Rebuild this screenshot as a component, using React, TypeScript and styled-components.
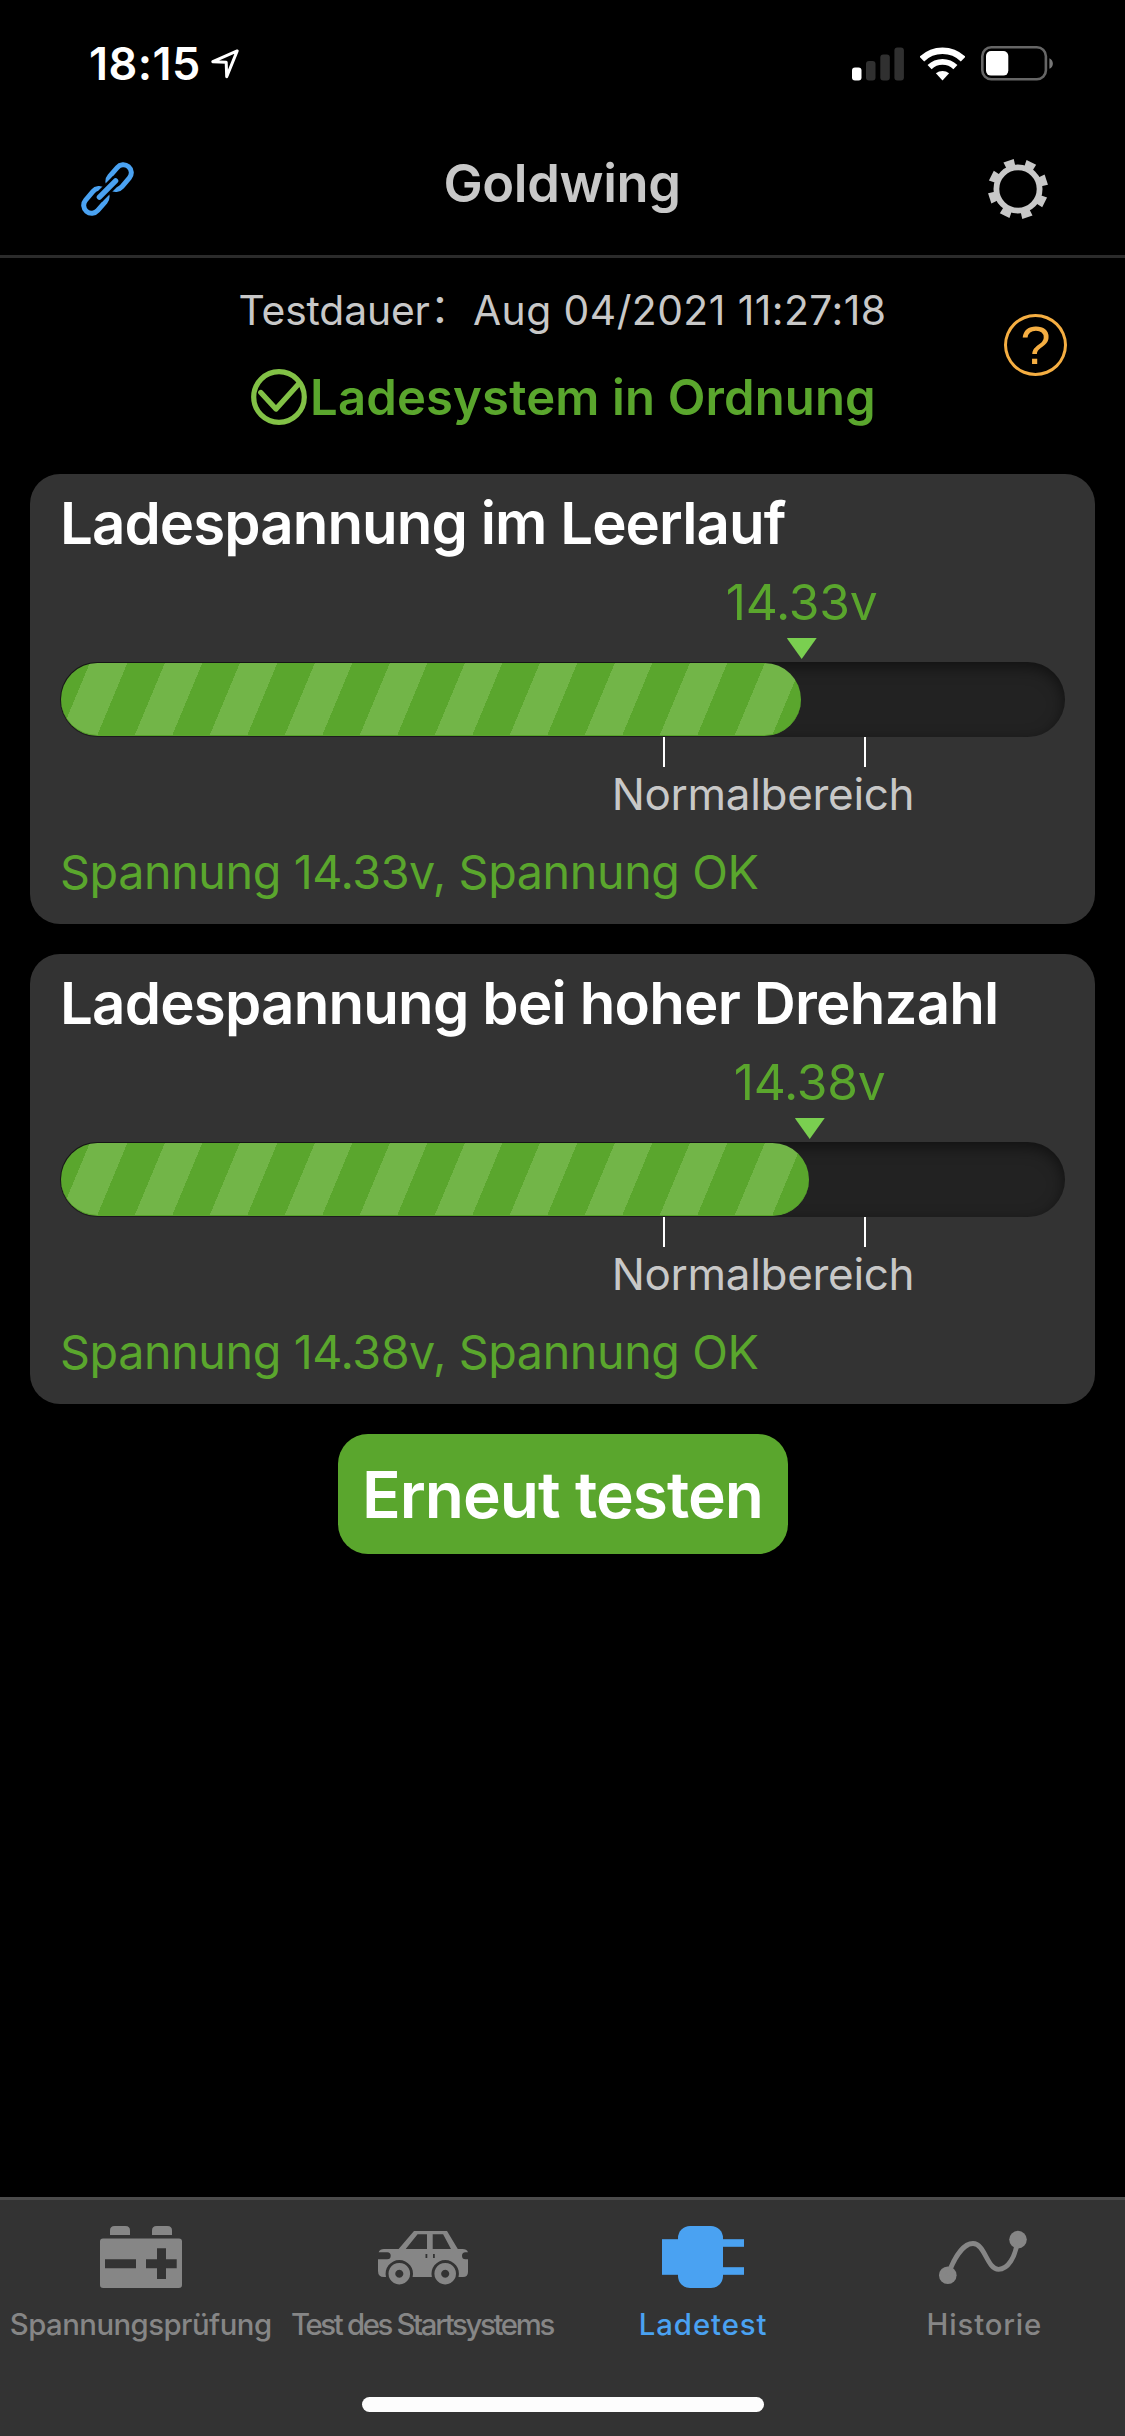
import React from "react";
import styled, { createGlobalStyle } from "styled-components";

const GREEN = "#5aa62d";

const GlobalStyle = createGlobalStyle`
  *, *::before, *::after { box-sizing: border-box; }
  html, body { margin: 0; padding: 0; background: #000; }
  body { font-family: Inter, "Liberation Sans", "Noto Sans CJK SC", sans-serif; }
  h1, h2, p { margin: 0; font-weight: inherit; }
`;

const Screen = styled.div`
  display: flex;
  flex-direction: column;
  width: 1125px;
  height: 2436px;
  background: #000;
  overflow: hidden;
  white-space: nowrap;
`;

const StatusBar = styled.div`
  display: flex;
  align-items: center;
  height: 127px;
  padding: 0 71px 0 89px;
  color: #fff;
`;

const Clock = styled.span`
  font-size: 45px;
  font-weight: 600;
  line-height: 56px;
  letter-spacing: 0.45px;
`;

const LocationIcon = styled.svg`
  width: 30px;
  height: 31px;
  margin-left: 9px;
`;

const StatusIcons = styled.div`
  display: flex;
  align-items: center;
  gap: 16px;
  margin-left: auto;
`;

const NavBar = styled.header`
  display: flex;
  align-items: center;
  justify-content: space-between;
  height: 131px;
  padding: 0 77px 4px 81px;
  border-bottom: 3px solid #2b2b2b;
`;

const NavTitle = styled.h1`
  margin: 0 0 13px 2px;
  color: #c8c8c8;
  font-size: 52.4px;
  font-weight: 600;
  line-height: 64px;
  letter-spacing: -0.36px;
`;

const Summary = styled.section`
  display: grid;
  grid-template-columns: 1fr auto 1fr;
  grid-template-rows: 60px 60px;
  row-gap: 27px;
  height: 216px;
  padding-top: 22px;
`;

const TestTime = styled.p`
  grid-column: 2;
  justify-self: center;
  color: #c8c8c8;
  font-size: 40.8px;
  line-height: 60px;
  letter-spacing: 0.46px;
`;

const TestTimeLabel = styled.span`
  letter-spacing: -0.15px;
`;

const WideColon = styled.span`
  margin-right: 2px;
  line-height: 0;
  vertical-align: 2px;
`;

const Verdict = styled.div`
  grid-column: 2;
  grid-row: 2;
  justify-self: center;
  display: flex;
  align-items: center;
  gap: 3px;
  margin-left: 2px;
  color: ${GREEN};
  font-size: 49px;
  font-weight: 600;
  line-height: 60px;
  letter-spacing: 0.15px;
`;

const VerdictText = styled.span`
  padding-top: 2px;
`;

const HelpButton = styled.div`
  grid-column: 3;
  grid-row: 1 / 3;
  justify-self: end;
  align-self: center;
  display: flex;
  align-items: center;
  justify-content: center;
  width: 63px;
  height: 62px;
  margin: 0 58px 17px 0;
  border: 3.5px solid #f5ae42;
  border-radius: 50%;
  color: #f5ae42;
  font-family: "Liberation Sans", sans-serif;
  font-size: 54px;
  line-height: 54px;
`;

const Content = styled.main`
  display: flex;
  flex: 1;
  flex-direction: column;
  align-items: center;
  gap: 30px;
  padding: 0 30px;
`;

const Card = styled.section`
  display: flex;
  flex-direction: column;
  width: 100%;
  height: 450px;
  padding: 14px 30px 22px;
  border-radius: 30px;
  background: #333;
`;

const CardTitle = styled.h2<{ $tracking: number }>`
  color: #fff;
  font-size: 58.2px;
  font-weight: 600;
  line-height: 70px;
  letter-spacing: ${(p) => p.$tracking}px;
`;

const Marker = styled.div<{ $at: number }>`
  display: flex;
  flex-direction: column;
  align-items: center;
  width: max-content;
  margin: 14px 0 3px ${(p) => p.$at}%;
  transform: translateX(-50%);
`;

const MarkerValue = styled.span`
  margin-bottom: 6px;
  color: ${GREEN};
  font-size: 49.7px;
  line-height: 60px;
  letter-spacing: -0.2px;
`;

const Pointer = styled.i`
  width: 30px;
  height: 21px;
  background: #7acf50;
  clip-path: polygon(0 0, 100% 0, 50% 100%);
`;

const Track = styled.div`
  height: 75px;
  padding: 1px;
  border-radius: 38px;
  background: #222;
  box-shadow: inset 0 5px 15px rgba(0, 0, 0, 0.5);
`;

const Fill = styled.div<{ $to: number }>`
  width: ${(p) => p.$to}%;
  height: 73px;
  border-radius: 37px;
  border-bottom: 1px solid ${GREEN};
  background: repeating-linear-gradient(
    112.6deg,
    ${GREEN} 0 26.6px,
    #72b548 26.6px 61.2px,
    ${GREEN} 61.2px 69.24px
  );
`;

const Range = styled.div`
  display: flex;
  flex-direction: column;
  align-items: center;
  width: calc(20% + 2px);
  margin-left: 60%;
`;

const RangeTicks = styled.div`
  width: 100%;
  height: 30px;
  border: solid #fff;
  border-width: 0 2px;
`;

const RangeLabel = styled.span`
  margin-top: 2px;
  padding-right: 3px;
  color: #c8c8c8;
  font-size: 44px;
  line-height: 50px;
  letter-spacing: -0.3px;
`;

const Message = styled.p`
  margin-top: auto;
  color: ${GREEN};
  font-size: 46.7px;
  line-height: 60px;
  letter-spacing: -0.41px;
`;

const RetestButton = styled.button`
  width: 450px;
  height: 120px;
  padding: 2px 0 0;
  border: 0;
  border-radius: 30px;
  background: ${GREEN};
  color: #fff;
  font: 600 64px/76px Inter, "Liberation Sans", sans-serif;
  letter-spacing: -0.96px;
`;

const TabBar = styled.footer`
  display: flex;
  flex-direction: column;
  align-items: center;
  height: 239px;
  border-top: 3px solid #4b4b4b;
  background: #333;
`;

const Tabs = styled.nav`
  display: grid;
  grid-template-columns: repeat(4, minmax(0, 1fr));
  width: 100%;
  height: 197px;
`;

const Tab = styled.div<{ $active?: boolean }>`
  display: flex;
  flex-direction: column;
  align-items: center;
  gap: 19px;
  padding-top: 26px;
  color: ${(p) => (p.$active ? "#4aa2f2" : "#868686")};
`;

const TabLabel = styled.span<{ $tracking: number }>`
  font-size: 29.3px;
  font-weight: 500;
  line-height: 36px;
  letter-spacing: ${(p) => p.$tracking}px;
`;

const HomeIndicator = styled.div`
  width: 402px;
  height: 15px;
  border-radius: 8px;
  background: #fdfdfd;
`;

const SignalIcon = () => (
  <svg width="52" height="34" viewBox="0 0 52 34">
    <rect x="0" y="20.5" width="9.5" height="13" rx="3" fill="#fff" />
    <rect x="14" y="14" width="9.5" height="19.5" rx="3" fill="#303030" />
    <rect x="28.3" y="7.5" width="9.5" height="26" rx="3" fill="#303030" />
    <rect x="42.4" y="0.5" width="9.5" height="33" rx="3" fill="#303030" />
  </svg>
);

const WifiIcon = () => (
  <svg width="45" height="34" viewBox="-22.5 -33.5 45 34" fill="none" stroke="#fff">
    <path d="M-20.6 -21.4A29.7 29.7 0 0 1 20.6 -21.4" strokeWidth="6.6" />
    <path d="M-12.9 -13.3A18.5 18.5 0 0 1 12.9 -13.3" strokeWidth="5.8" />
    <path d="M0 0L-6.6 -7.2A10.4 10.4 0 0 1 6.6 -7.2Z" fill="#fff" stroke="none" />
  </svg>
);

const BatteryIcon = () => (
  <svg width="73" height="35" viewBox="0 0 73 35">
    <rect x="1.3" y="1.3" width="63.6" height="32" rx="9" fill="none" stroke="#666" strokeWidth="2.6" />
    <rect x="5" y="5" width="22.3" height="24.6" rx="5" fill="#fff" />
    <path d="M68.4 12.2C73 14 73 21 68.4 22.8Z" fill="#777" />
  </svg>
);

const LinkIcon = () => (
  <svg width="53" height="54" viewBox="0 0 53 54" fill="none" stroke="#4aa2f2" strokeWidth="5">
    <mask id="link-gap" maskUnits="userSpaceOnUse" x="0" y="0" width="53" height="54">
      <rect width="53" height="54" fill="#fff" stroke="none" />
      <path d="M36 17.500L17 36.500" stroke="#000" strokeWidth="10.600" />
    </mask>
    <g mask="url(#link-gap)">
      <rect x="-8" y="-13.700" width="16" height="27.400" rx="8" transform="translate(38.600 15.100) rotate(40.500)" />
      <rect x="-8" y="-13.700" width="16" height="27.400" rx="8" transform="translate(14.400 38.900) rotate(40.500)" />
    </g>
    <path d="M34.600 18.900L18.400 35.100" strokeWidth="5.400" strokeLinecap="round" />
  </svg>
);

const GearIcon = () => (
  <svg width="60" height="60" viewBox="-30 -30 60 60">
    <circle r="21.6" fill="none" stroke="#c8c8c8" strokeWidth="5.8" />
    {[0, 1, 2, 3, 4, 5, 6, 7].map((i) => (
      <path key={i} transform={`rotate(${27 + i * 45})`} d="M-4.6 -23L-5.6 -29.8H5.2L4.6 -23Z" fill="#c8c8c8" />
    ))}
  </svg>
);

const CheckIcon = () => (
  <svg width="56" height="56" viewBox="0 0 56 56" fill="none" stroke="#82c146">
    <circle cx="28" cy="28" r="25.3" strokeWidth="5.2" />
    <path d="M9.8 23.5L25 40L48 14.5" strokeWidth="5.4" strokeLinecap="round" strokeLinejoin="round" />
  </svg>
);

const BatteryTabIcon = () => (
  <svg width="82" height="62" viewBox="0 0 82 62" fill="currentColor">
    <path d="M10 9V4.500Q10 0 14.500 0H25.500Q30 0 30 4.500V9Z" />
    <path d="M52 9V4.500Q52 0 56.500 0H67.500Q72 0 72 4.500V9Z" />
    <path
      fillRule="evenodd"
      d="M3 12.500H79Q82 12.500 82 15.500V59Q82 62 79 62H3Q0 62 0 59V15.500Q0 12.500 3 12.500ZM5 33.300V42.200H36V33.300ZM57 22.300V33.300H46V42.200H57V53H66V42.200H76.700V33.300H66V22.300Z"
    />
  </svg>
);

const CarTabIcon = () => (
  <svg width="92" height="62" viewBox="-2 -5 92 62" fill="currentColor">
    <path
      fillRule="evenodd"
      d="M20.600 18L36 0H69L79.800 18H84.500Q88.800 18 90 21.300H87.500A3.500 3.500 0 0 0 87.500 28.300H90V41Q90 46 85 46H80.500A13.700 13.700 0 1 0 53.900 46H34.600A13.700 13.700 0 1 0 8 46H6Q0 46 0 40V28.300H9.200A3.500 3.500 0 0 0 9.200 21.300H0.600Q2 18 6 18ZM27.700 18H49V3.300H39.600ZM54.700 3.300V18H73L65.100 3.300ZM47.500 23V27H49.300V23ZM55 23V27H56.800V23Z"
    />
    <path fillRule="evenodd" d="M21.300 31.900a10.800 10.800 0 1 0 .01 0ZM21.300 38.700a4 4 0 1 1 -.01 0Z" />
    <path fillRule="evenodd" d="M67.200 31.900a10.800 10.800 0 1 0 .01 0ZM67.200 38.700a4 4 0 1 1 -.01 0Z" />
  </svg>
);

const PlugTabIcon = () => (
  <svg width="82" height="62" viewBox="0 0 82 62" fill="currentColor">
    <rect y="13.200" width="20" height="35.600" />
    <rect x="16" width="45" height="62" rx="12" />
    <rect x="58" y="13.200" width="24" height="7.600" />
    <rect x="58" y="41.200" width="24" height="7.600" />
  </svg>
);

const HistoryTabIcon = () => (
  <svg width="90" height="62" viewBox="0 -5 90 62">
    <circle cx="8.800" cy="44.300" r="8.800" fill="currentColor" />
    <circle cx="79" cy="8.600" r="8.800" fill="currentColor" />
    <path
      d="M8.800 44.300C14 30 23 12.500 34 12.500C46 12.500 48 38.300 59.500 38.300C69 38.300 76.500 26 78.500 10"
      fill="none"
      stroke="currentColor"
      strokeWidth="4.800"
    />
  </svg>
);

const readings = [
  { title: "Ladespannung im Leerlauf", tracking: -0.93, value: "14.33v", percent: 73.8 },
  { title: "Ladespannung bei hoher Drehzahl", tracking: -0.8, value: "14.38v", percent: 74.6 },
];

const tabs = [
  { label: "Spannungsprüfung", Icon: BatteryTabIcon, tracking: -0.51 },
  { label: "Test des Startsystems", Icon: CarTabIcon, tracking: -2.33 },
  { label: "Ladetest", Icon: PlugTabIcon, tracking: 0.93, active: true },
  { label: "Historie", Icon: HistoryTabIcon, tracking: 0.87 },
];

export default function App() {
  return (
    <Screen>
      <GlobalStyle />
      <StatusBar>
        <Clock>18:15</Clock>
        <LocationIcon viewBox="-1 -1 30 31" fill="none" stroke="#fff" strokeWidth="3" strokeLinejoin="round">
          <path d="M26.200 1.900L1.800 12.700L15.200 13.200L15.700 27.700Z" />
        </LocationIcon>
        <StatusIcons>
          <SignalIcon />
          <WifiIcon />
          <BatteryIcon />
        </StatusIcons>
      </StatusBar>
      <NavBar>
        <LinkIcon />
        <NavTitle>Goldwing</NavTitle>
        <GearIcon />
      </NavBar>
      <Summary>
        <TestTime>
          <TestTimeLabel>Testdauer</TestTimeLabel>
          <WideColon>：</WideColon>
          Aug 04/2021 11:27:18
        </TestTime>
        <Verdict>
          <CheckIcon />
          <VerdictText>Ladesystem in Ordnung</VerdictText>
        </Verdict>
        <HelpButton>?</HelpButton>
      </Summary>
      <Content>
        {readings.map((r) => (
          <Card key={r.title}>
            <CardTitle $tracking={r.tracking}>{r.title}</CardTitle>
            <Marker $at={r.percent}>
              <MarkerValue>{r.value}</MarkerValue>
              <Pointer />
            </Marker>
            <Track>
              <Fill $to={r.percent} />
            </Track>
            <Range>
              <RangeTicks />
              <RangeLabel>Normalbereich</RangeLabel>
            </Range>
            <Message>Spannung {r.value}, Spannung OK</Message>
          </Card>
        ))}
        <RetestButton>Erneut testen</RetestButton>
      </Content>
      <TabBar>
        <Tabs>
          {tabs.map(({ label, Icon, tracking, active }) => (
            <Tab key={label} $active={active}>
              <Icon />
              <TabLabel $tracking={tracking}>{label}</TabLabel>
            </Tab>
          ))}
        </Tabs>
        <HomeIndicator />
      </TabBar>
    </Screen>
  );
}
